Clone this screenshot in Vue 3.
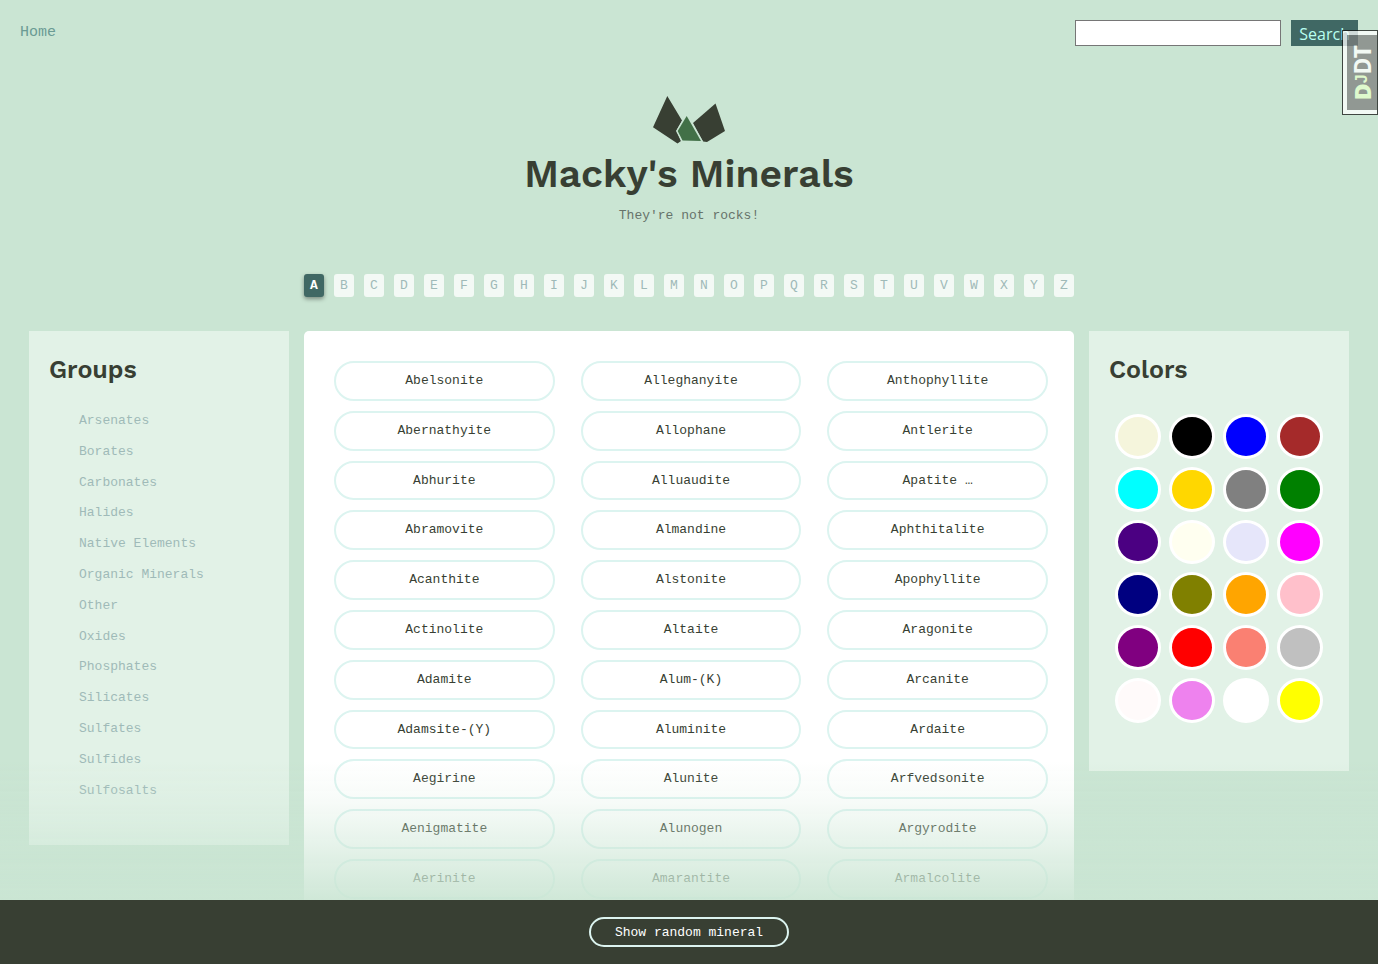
<script setup>
const letters = 'ABCDEFGHIJKLMNOPQRSTUVWXYZ'.split('')
const groups = ['Arsenates', 'Borates', 'Carbonates', 'Halides', 'Native Elements', 'Organic Minerals', 'Other', 'Oxides', 'Phosphates', 'Silicates', 'Sulfates', 'Sulfides', 'Sulfosalts']
const minerals = [
  'Abelsonite', 'Alleghanyite', 'Anthophyllite',
  'Abernathyite', 'Allophane', 'Antlerite',
  'Abhurite', 'Alluaudite', 'Apatite …',
  'Abramovite', 'Almandine', 'Aphthitalite',
  'Acanthite', 'Alstonite', 'Apophyllite',
  'Actinolite', 'Altaite', 'Aragonite',
  'Adamite', 'Alum-(K)', 'Arcanite',
  'Adamsite-(Y)', 'Aluminite', 'Ardaite',
  'Aegirine', 'Alunite', 'Arfvedsonite',
  'Aenigmatite', 'Alunogen', 'Argyrodite',
  'Aerinite', 'Amarantite', 'Armalcolite',
]
const colors = ['beige', 'black', 'blue', 'brown', 'cyan', 'gold', 'gray', 'green', 'indigo', 'ivory', 'lavender', 'magenta', 'navy', 'olive', 'orange', 'pink', 'purple', 'red', 'salmon', 'silver', 'snow', 'violet', 'white', 'yellow']
</script>

<template>
  <div class="page">
    <header class="topbar">
      <a class="home" href="#">Home</a>
      <form class="search" role="search" @submit.prevent>
        <input type="text" aria-label="Search minerals" />
        <button type="submit">Search</button>
      </form>
    </header>

    <div class="brand">
      <svg class="logo" viewBox="0 0 72 48" width="72" height="48" aria-hidden="true">
        <path d="M14.300 0 29 24.500 23.500 34.500 28 45 24.500 47.500 0 31.300z" fill="#383f33" />
        <path d="M62.500 7.500 72 35 54 46 50 45.500 40 27z" fill="#383f33" />
        <path d="M33.700 20 24.700 35 29.500 44.500 48 45z" fill="#427047" stroke="#cae5d3" stroke-width="3" paint-order="stroke" />
      </svg>
      <h1>Macky's Minerals</h1>
      <p>They're not rocks!</p>
    </div>

    <nav class="letters" aria-label="Letters">
      <a v-for="l in letters" :key="l" href="#" :class="{ active: l === 'A' }">{{ l }}</a>
    </nav>

    <div class="columns">
      <aside class="side">
        <h2>Groups</h2>
        <ul class="groups">
          <li v-for="g in groups" :key="g"><a href="#">{{ g }}</a></li>
        </ul>
      </aside>
      <main class="minerals">
        <a v-for="m in minerals" :key="m" href="#">{{ m }}</a>
      </main>
      <aside class="side">
        <h2>Colors</h2>
        <div class="swatches">
          <a v-for="c in colors" :key="c" href="#" :aria-label="c" :style="{ backgroundColor: c }">&nbsp;</a>
        </div>
      </aside>
    </div>

    <footer class="bottom">
      <button type="button">Show random mineral</button>
    </footer>

    <div class="handle">
      <a href="#"><span class="word"><b>D<small>J</small></b>DT</span></a>
    </div>
  </div>
</template>

<style>
body {
  margin: 0;
  background: #cae5d3;
}
</style>

<style scoped>
.page {
  box-sizing: border-box;
  height: 100vh;
  overflow: hidden;
  font-family: "Liberation Mono", monospace;
  font-size: 13px;
  line-height: 1.6;
  color: #383f33;
}
a {
  text-decoration: none;
}
.topbar {
  display: flex;
  justify-content: space-between;
  padding: 20px 20px 0;
}
.home {
  font-size: 15px;
  line-height: 26px;
  color: #6b9b94;
}
.search {
  display: flex;
  gap: 10px;
}
.search input {
  box-sizing: border-box;
  width: 206px;
  height: 26px;
  border: 1px solid #767676;
  background: #fff;
}
.search button {
  height: 26px;
  padding: 2px 8px 0;
  border: 0;
  background: #406864;
  color: #b8fff0;
  font: 16px/24px "Open Sans", sans-serif;
}
.brand {
  display: flex;
  flex-direction: column;
  align-items: center;
  padding-top: 50px;
}
h1 {
  margin: 0;
  font: 600 39px/60px "Work Sans", "Noto Sans", sans-serif;
}
.brand p {
  margin: 1px 0 0;
  line-height: 21px;
  color: #66736a;
}
.letters {
  display: flex;
  justify-content: center;
  gap: 10px;
  margin: 48px 0 34px;
}
.letters a {
  width: 20px;
  padding: 1px 0;
  border-radius: 3px;
  background: #f3f9f5;
  color: #9fbab8;
  line-height: 21px;
  text-align: center;
}
.letters .active {
  background: #406864;
  color: #fff;
  font-weight: 700;
  box-shadow: 0 2px 4px rgba(0, 0, 0, 0.4);
}
.columns {
  display: grid;
  grid-template-columns: 260px minmax(0, 770px) 260px;
  justify-content: center;
  align-items: start;
  gap: 15px;
}
.side {
  background: #e2f2e7;
  padding: 20px 20px 44px;
}
h2 {
  margin: 0 0 22px;
  font: 600 25px/38px "Work Sans", "Noto Sans", sans-serif;
}
.groups {
  display: grid;
  gap: 10px;
  margin: 0;
  padding: 0 0 0 30px;
  list-style: none;
}
.groups a {
  display: block;
  color: #9fbab8;
}
.minerals {
  display: grid;
  grid-template-columns: repeat(3, 1fr);
  gap: 10px 26px;
  padding: 30px 26px 30px 30px;
  border-radius: 5px 5px 0 0;
  background: #fff;
}
.minerals a {
  padding: 8px 0 7px;
  border: 2px solid #dcf4f0;
  border-radius: 20px;
  color: #383f33;
  text-align: center;
}
.swatches {
  display: grid;
  grid-template-columns: repeat(4, 46px);
  justify-content: center;
  gap: 8px;
  padding: 3px 0 4px;
}
.swatches a {
  padding: 9px 0;
  border: 3px solid #fff;
  border-radius: 50%;
}
.bottom {
  position: fixed;
  right: 0;
  bottom: 0;
  left: 0;
  display: flex;
  justify-content: center;
  padding: 17px 0;
  background: #383f33;
}
.bottom::before {
  content: "";
  position: absolute;
  right: 0;
  bottom: 100%;
  left: 0;
  height: 140px;
  background: linear-gradient(rgba(202, 229, 211, 0), rgba(202, 229, 211, 0.15) 30%, rgba(202, 229, 211, 0.9));
  pointer-events: none;
}
.bottom button {
  height: 30px;
  padding: 2px 24px 0;
  border: 2px solid #dcf4f0;
  border-radius: 15px;
  background: transparent;
  color: #fff;
  font: 13px/24px "Liberation Mono", monospace;
}
.handle {
  position: fixed;
  top: 30px;
  right: 0;
  border: 1px solid #111;
  background: #fff;
  opacity: 0.75;
}
.handle a {
  display: flex;
  align-items: center;
  justify-content: center;
  width: 30px;
  height: 75px;
  border: 4px solid #fff;
  border-right: 0;
  background: #000;
  color: #fff;
  opacity: 0.5;
}
.word {
  writing-mode: vertical-rl;
  transform: rotate(180deg);
  font: 700 23px/30px "Noto Sans", sans-serif;
}
.word b {
  color: #cf9;
}
.word small {
  font: 700 16px/30px "Liberation Sans", sans-serif;
}
</style>
